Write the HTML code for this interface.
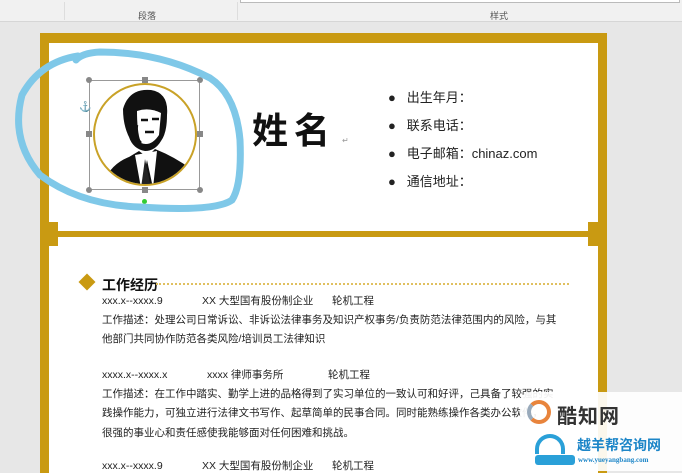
<!DOCTYPE html>
<html><head><meta charset="utf-8"><style>
*{margin:0;padding:0;box-sizing:border-box}
body{width:682px;height:471px;overflow:hidden;background:#e7e7e7;font-family:"Liberation Sans","Noto Sans CJK SC",sans-serif;position:relative;color:#222}
.a{position:absolute;white-space:nowrap}
.t{font-size:10.5px;line-height:14px}
.m{color:#999;font-size:8px}
</style></head><body>
<div class="a" style="left:0;top:0;width:682px;height:22px;background:#f1f1f1;border-bottom:1px solid #d6d6d6"></div>
<div class="a" style="left:240px;top:0;width:440px;height:3px;border:1px solid #bbb;border-top:none;background:#fff"></div>
<div class="a" style="left:64px;top:2px;width:1px;height:18px;background:#ddd"></div>
<div class="a" style="left:237px;top:2px;width:1px;height:18px;background:#ddd"></div>
<div class="a" style="left:138px;top:9px;font-size:9px;color:#555">段落</div>
<div class="a" style="left:490px;top:9px;font-size:9px;color:#555">样式</div>
<!-- gold frame -->
<div class="a" style="left:40px;top:33px;width:567px;height:440px;background:#c99a12"></div>
<div class="a" style="left:49px;top:43px;width:549px;height:430px;background:#fff"></div>
<div class="a" style="left:49px;top:231px;width:549px;height:6px;background:#c99a12"></div>
<div class="a" style="left:48px;top:222px;width:10px;height:24px;background:#c99a12"></div>
<div class="a" style="left:588px;top:222px;width:10px;height:24px;background:#c99a12"></div>
<!-- photo -->
<div class="a" style="left:89px;top:80px;width:111px;height:110px;border:1px solid #999"></div>
<div class="a" style="left:93px;top:83px;width:104px;height:103px;border-radius:50%;border:2px solid #c9a227;background:#fff;overflow:hidden">
<svg width="104" height="103" viewBox="0 0 104 103"><path d="M28 24 Q34 3 56 5 Q74 8 72 30 Q72 48 66 56 Q60 66 50 66 Q38 64 34 52 Q28 40 28 24Z" fill="#111"/><path d="M42 26 Q54 22 66 28 L64 50 Q56 62 46 58 Q42 48 42 26Z" fill="#fff"/><path d="M46 35h7M57 34h7M50 47h9M42 40 Q40 52 46 58" stroke="#111" stroke-width="2.5" fill="none"/><path d="M8 100 Q14 80 34 72 L44 66 L52 72 L60 64 Q80 72 96 84 L100 103 L4 103Z" fill="#111"/><path d="M40 70 L46 103 L52 75 L58 103 L62 66" fill="#fff"/><path d="M50 74 L46 103 L56 103Z" fill="#222"/></svg></div>
<div class="a" style="left:86px;top:77px;width:6px;height:6px;border-radius:50%;background:#888"></div>
<div class="a" style="left:142px;top:77px;width:6px;height:6px;background:#888"></div>
<div class="a" style="left:197px;top:77px;width:6px;height:6px;border-radius:50%;background:#888"></div>
<div class="a" style="left:86px;top:131px;width:6px;height:6px;background:#888"></div>
<div class="a" style="left:197px;top:131px;width:6px;height:6px;background:#888"></div>
<div class="a" style="left:86px;top:187px;width:6px;height:6px;border-radius:50%;background:#888"></div>
<div class="a" style="left:142px;top:187px;width:6px;height:6px;background:#888"></div>
<div class="a" style="left:197px;top:187px;width:6px;height:6px;border-radius:50%;background:#888"></div>
<div class="a" style="left:142px;top:199px;width:5px;height:5px;border-radius:50%;background:#3c3"></div>
<div class="a" style="left:79px;top:102px;font-size:10px;color:#7aa">⚓</div>
<!-- blue scribble -->
<svg class="a" style="left:0;top:0" width="682" height="471"><path d="M78 56 Q40 62 22 95 Q10 140 40 175 Q80 205 140 207 Q215 212 232 200 Q242 185 240 140 Q236 95 210 78 Q160 52 100 52 Q82 53 76 60" fill="none" stroke="#7fc8e8" stroke-width="7" stroke-linecap="round"/></svg>
<div class="a" style="left:252px;top:111px;font-size:36px;font-weight:bold;letter-spacing:6px;line-height:40px;color:#111">姓名</div>
<div class="a m" style="left:342px;top:136px">↵</div>
<!-- contacts -->
<div class="a" style="left:388px;top:88px;font-size:13px;line-height:20px">
<div>●&nbsp;&nbsp; 出生年月：</div><div style="height:8px"></div>
<div>●&nbsp;&nbsp; 联系电话：</div><div style="height:8px"></div>
<div>●&nbsp;&nbsp; 电子邮箱：chinaz.com</div><div style="height:8px"></div>
<div>●&nbsp;&nbsp; 通信地址：</div></div>
<!-- section -->
<div class="a" style="left:81px;top:276px;width:12px;height:12px;background:#c99a12;transform:rotate(45deg)"></div>
<div class="a" style="left:102px;top:275px;font-size:14px;font-weight:bold;color:#111">工作经历</div>
<div class="a" style="left:156px;top:283px;width:413px;border-top:2px dotted #e0c060"></div>
<div class="a t" style="left:102px;top:294px">xxx.x--xxxx.9</div>
<div class="a t" style="left:202px;top:294px">XX 大型国有股份制企业</div>
<div class="a t" style="left:332px;top:294px">轮机工程</div>
<div class="a t" style="left:102px;top:313px">工作描述：处理公司日常诉讼、非诉讼法律事务及知识产权事务/负责防范法律范围内的风险，与其</div>
<div class="a t" style="left:102px;top:332px">他部门共同协作防范各类风险/培训员工法律知识</div>
<div class="a t" style="left:102px;top:368px">xxxx.x--xxxx.x</div>
<div class="a t" style="left:207px;top:368px">xxxx 律师事务所</div>
<div class="a t" style="left:328px;top:368px">轮机工程</div>
<div class="a t" style="left:102px;top:387px">工作描述：在工作中踏实、勤学上进的品格得到了实习单位的一致认可和好评，己具备了较强的实</div>
<div class="a t" style="left:102px;top:406px">践操作能力，可独立进行法律文书写作、起草简单的民事合同。同时能熟练操作各类办公软件，</div>
<div class="a t" style="left:102px;top:426px">很强的事业心和责任感使我能够面对任何困难和挑战。</div>
<div class="a t" style="left:102px;top:459px">xxx.x--xxxx.9</div>
<div class="a t" style="left:202px;top:459px">XX 大型国有股份制企业</div>
<div class="a t" style="left:332px;top:459px">轮机工程</div>
<!-- watermark -->
<div class="a" style="left:520px;top:392px;width:162px;height:79px;background:#fff;opacity:.92;border-radius:10px 0 0 0"></div>
<div class="a" style="left:527px;top:400px;width:24px;height:24px;border-radius:50%;border:4px solid #e8843c;border-left-color:#9ab"></div>
<div class="a" style="left:557px;top:400px;font-size:20px;font-weight:bold;color:#333;letter-spacing:1px">酷知网</div>
<div class="a" style="left:535px;top:434px;width:30px;height:20px;border-radius:15px 15px 0 0;border:4px solid #2aa0d8;border-bottom:none"></div>
<div class="a" style="left:535px;top:455px;width:40px;height:10px;background:#2aa0d8;border-radius:3px"></div>
<div class="a" style="left:577px;top:435px;font-size:14px;font-weight:bold;color:#1d86c8">越羊帮咨询网</div>
<div class="a" style="left:578px;top:456px;font-size:7px;color:#1d86c8;font-family:'Liberation Serif',serif;font-weight:bold">www.yueyangbang.com</div>
</body></html>
